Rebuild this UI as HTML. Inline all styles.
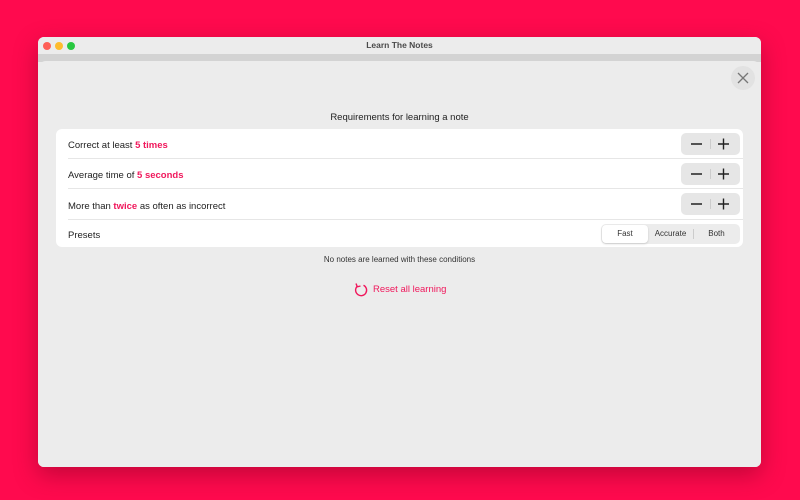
<!DOCTYPE html>
<html><head><meta charset="utf-8"><style>
*{margin:0;padding:0;box-sizing:border-box}
body{width:800px;height:500px;background:#ff0a4e;font-family:"Liberation Sans",sans-serif;position:relative;overflow:hidden}
.win{position:absolute;left:38px;top:37px;width:723px;height:430px;background:#ececec;border-radius:6px;overflow:hidden;box-shadow:0 8px 24px rgba(120,0,30,.45)}
.tb{height:17px;background:#ececec;text-align:center;font-size:8.5px;font-weight:bold;color:#4a4a4a;line-height:17px}
.dot{position:absolute;top:5px;width:8px;height:8px;border-radius:50%}
.strip{height:8px;background:#d3d3d3}
.content{position:absolute;left:0;top:24px;width:723px;height:406px;background:#ececec;border-radius:8px 8px 0 0}
.close{position:absolute;left:693px;top:29px;width:24px;height:24px;border-radius:50%;background:#e2e2e2}
.t{position:absolute;font-size:9.5px;color:#222}
.card{position:absolute;left:18px;top:92px;width:687px;height:118px;background:#fff;border-radius:6px}
.row{position:absolute;left:12px;right:0;border-bottom:1px solid #e6e6e6;font-size:9.5px;color:#222;padding-top:2px}
.row span{color:#f0185c;font-weight:bold}
.st{position:absolute;left:625px;width:59px;height:22px;background:#e6e6e6;border-radius:5px}
.seg{position:absolute;left:545px;top:95px;width:139px;height:20px;background:#ececec;border-radius:5px;font-size:8px;color:#333}
</style></head><body>
<div class="win">
<div class="tb">Learn The Notes</div>
<div class="dot" style="left:5px;background:#fe5f57"></div>
<div class="dot" style="left:17px;background:#febc2e"></div>
<div class="dot" style="left:29px;background:#28c840"></div>
<div class="strip"></div>
<div class="content"></div>
<div class="close"><svg width="24" height="24"><path d="M7 7L17 17M17 7L7 17" stroke="#777" stroke-width="1.3"/></svg></div>
<div class="t" style="left:0;width:723px;text-align:center;top:75px">Requirements for learning a note</div>
<div class="card">
<div class="row" style="top:0;height:30px;line-height:30px">Correct at least <span>5 times</span></div>
<div class="row" style="top:30px;height:30px;line-height:30px">Average time of <span>5 seconds</span></div>
<div class="row" style="top:60px;height:31px;line-height:31px">More than <span>twice</span> as often as incorrect</div>
<div class="row" style="top:91px;height:27px;line-height:27px;border:none">Presets</div>
<div class="st" style="top:4px"></div><div class="st" style="top:34px"></div><div class="st" style="top:64px"></div>
<svg style="position:absolute;left:625px;top:4px" width="59" height="90">
<g stroke="#222" stroke-width="1.4">
<path d="M10 11H21M37 11H48M42.5 5.5V16.5M10 41H21M37 41H48M42.5 35.5V46.5M10 71H21M37 71H48M42.5 65.5V76.5"/>
</g>
<g stroke="#ccc" stroke-width="1"><path d="M29.5 6V16M29.5 36V46M29.5 66V76"/></g>
</svg>
<div class="seg">
<div style="position:absolute;left:1px;top:1px;width:46px;height:18px;background:#fff;border-radius:4px;box-shadow:0 1px 2px rgba(0,0,0,.15);text-align:center;line-height:18px">Fast</div>
<div style="position:absolute;left:47px;width:45px;top:1px;text-align:center;line-height:18px">Accurate</div>
<div style="position:absolute;left:92px;top:5px;width:1px;height:10px;background:#ccc"></div>
<div style="position:absolute;left:93px;width:45px;top:1px;text-align:center;line-height:18px">Both</div>
</div>
</div>
<div class="t" style="left:0;width:723px;text-align:center;top:218px;font-size:8px;color:#333">No notes are learned with these conditions</div>
<svg style="position:absolute;left:315px;top:245px" width="16" height="16"><path d="M10.5 3.2A5.5 5.5 0 1 1 4 4.5" fill="none" stroke="#f0185c" stroke-width="1.4"/><path d="M3 1.5L4.3 4.8L7.5 4" fill="none" stroke="#f0185c" stroke-width="1.4"/></svg>
<div class="t" style="left:335px;top:247px;color:#f0185c;font-size:9.5px">Reset all learning</div>
</div>
</body></html>
